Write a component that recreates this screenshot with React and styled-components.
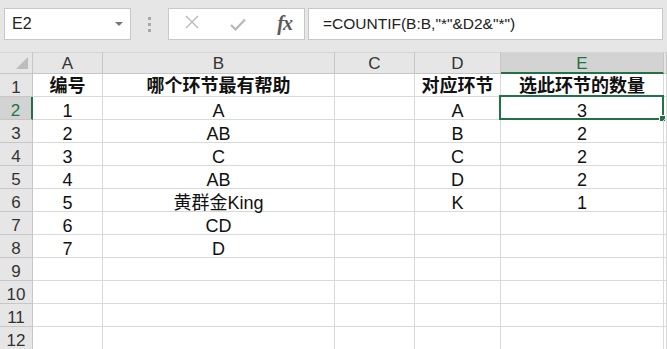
import React from 'react';
import styled, { createGlobalStyle } from 'styled-components';

const GlobalStyle = createGlobalStyle`
    html, body {
        margin: 0;
        padding: 0;
        background: #ffffff;
        overflow: hidden;
    }
    body {
        font-family: "Liberation Sans", "Noto Sans CJK SC", sans-serif;
    }
`;

const GREEN = '#217346';
const COLS = [70, 232, 80, 86, 163];
const LETTERS = ['A', 'B', 'C', 'D', 'E'];

const Page = styled.div`
    width: 667px;
    height: 349px;
    overflow: hidden;
    background: #ffffff;
`;

const Toolbar = styled.div`
    height: 52px;
    background: #e6e6e6;
    display: flex;
    align-items: flex-start;
    padding: 8px 4px 0 4px;
    box-sizing: border-box;
`;

const NameBox = styled.div`
    width: 127px;
    height: 32px;
    box-sizing: border-box;
    background: #ffffff;
    border: 1px solid #c8c8c8;
    display: flex;
    align-items: center;
    justify-content: space-between;
    padding: 0 7px 0 7px;
    font-size: 16px;
    color: #222;
`;

const Caret = styled.span`
    width: 0;
    height: 0;
    border-left: 4px solid transparent;
    border-right: 4px solid transparent;
    border-top: 4px solid #777;
`;

const Grip = styled.div`
    width: 37px;
    height: 32px;
    display: flex;
    flex-direction: column;
    align-items: center;
    justify-content: center;
    gap: 3px;

    span {
        width: 3px;
        height: 3px;
        background: #a8a8a8;
    }
`;

const ButtonBox = styled.div`
    width: 137px;
    height: 32px;
    box-sizing: border-box;
    background: #ffffff;
    border: 1px solid #c8c8c8;
    display: flex;
    align-items: center;
    justify-content: space-between;
    padding: 0 12px 0 14px;
`;

const Fx = styled.span`
    font-family: "Liberation Serif", "DejaVu Serif", serif;
    font-style: italic;
    font-weight: 700;
    font-size: 20px;
    color: #5a5a5a;
    letter-spacing: -1px;
    margin-top: -2px;
`;

const FormulaBox = styled.div`
    margin-left: 3px;
    flex: 1;
    height: 32px;
    box-sizing: border-box;
    background: #ffffff;
    border: 1px solid #c8c8c8;
    display: flex;
    align-items: center;
    padding-left: 14px;
    font-size: 15.5px;
    color: #222;
`;

const Grid = styled.div`
    display: grid;
    grid-template-columns: 33px ${COLS.map((w) => `${w}px`).join(' ')} 1fr;
    grid-auto-rows: 23px;
    grid-template-rows: 22px;
`;

const Corner = styled.div`
    background: #e6e6e6;
    border-right: 1px solid #c6c6c6;
    border-bottom: 1px solid #c6c6c6;
    border-top: 1px solid #d6d6d6;
    box-sizing: border-box;
    position: relative;

    &::after {
        content: '';
        position: absolute;
        right: 4px;
        bottom: 4px;
        width: 0;
        height: 0;
        border-left: 12px solid transparent;
        border-bottom: 12px solid #bdbdbd;
    }
`;

const ColHead = styled.div`
    box-sizing: border-box;
    background: ${(p) => (p.$active ? '#d3d3d3' : '#e6e6e6')};
    border-top: 1px solid #d6d6d6;
    border-right: 1px solid #c6c6c6;
    border-bottom: ${(p) => (p.$active ? `2px solid ${GREEN}` : '1px solid #c6c6c6')};
    color: ${(p) => (p.$active ? GREEN : '#333')};
    font-size: 17px;
    display: flex;
    align-items: center;
    justify-content: center;
    line-height: 1;
    padding-top: ${(p) => (p.$active ? '1px' : '0')};
`;

const RowHead = styled.div`
    box-sizing: border-box;
    background: ${(p) => (p.$active ? '#d3d3d3' : '#e6e6e6')};
    border-right: ${(p) => (p.$active ? `2px solid ${GREEN}` : '1px solid #c6c6c6')};
    border-bottom: 1px solid #c6c6c6;
    color: ${(p) => (p.$active ? GREEN : '#333')};
    font-size: 17px;
    display: flex;
    align-items: center;
    justify-content: center;
    line-height: 1;
    padding-top: 5px;
`;

const Cell = styled.div`
    box-sizing: border-box;
    border-right: 1px solid #d9d9d9;
    border-bottom: 1px solid #d9d9d9;
    font-size: 18px;
    font-weight: ${(p) => (p.$bold ? 700 : 400)};
    color: #111;
    display: flex;
    align-items: center;
    justify-content: center;
    white-space: nowrap;
    line-height: 1;
    position: relative;
    padding-top: ${(p) => (p.$bold ? '2px' : '5px')};
`;

const Selection = styled.div`
    position: absolute;
    left: -2px;
    top: -2px;
    right: -1px;
    bottom: -1px;
    border: 2px solid ${GREEN};
    pointer-events: none;

    &::after {
        content: '';
        position: absolute;
        right: -4px;
        bottom: -4px;
        width: 5px;
        height: 5px;
        background: ${GREEN};
        border: 1px solid #fff;
    }
`;

const rows = [
    ['编号', '哪个环节最有帮助', '', '对应环节', '选此环节的数量'],
    ['1', 'A', '', 'A', '3'],
    ['2', 'AB', '', 'B', '2'],
    ['3', 'C', '', 'C', '2'],
    ['4', 'AB', '', 'D', '2'],
    ['5', '黄群金King', '', 'K', '1'],
    ['6', 'CD', '', '', ''],
    ['7', 'D', '', '', ''],
    ['', '', '', '', ''],
    ['', '', '', '', ''],
    ['', '', '', '', ''],
    ['', '', '', '', ''],
];

const CrossIcon = () => (
    <svg width="14" height="14" viewBox="0 0 14 14">
        <path d="M1 1 L13 13 M13 1 L1 13" stroke="#b8b8b8" strokeWidth="1.3" fill="none" />
    </svg>
);

const CheckIcon = () => (
    <svg width="16" height="13" viewBox="0 0 16 13">
        <path d="M1 7 L5.5 11.5 L15 1.5" stroke="#b8b8b8" strokeWidth="2.2" fill="none" />
    </svg>
);

const App = () => {
    return (
        <Page>
            <GlobalStyle />
            <Toolbar>
                <NameBox>
                    E2
                    <Caret />
                </NameBox>
                <Grip>
                    <span />
                    <span />
                    <span />
                </Grip>
                <ButtonBox>
                    <span style={{ marginLeft: 2 }}>
                        <CrossIcon />
                    </span>
                    <CheckIcon />
                    <Fx>fx</Fx>
                </ButtonBox>
                <FormulaBox>=COUNTIF(B:B,"*"&amp;D2&amp;"*")</FormulaBox>
            </Toolbar>
            <Grid>
                <Corner />
                {LETTERS.map((l) => (
                    <ColHead key={l} $active={l === 'E'}>
                        {l}
                    </ColHead>
                ))}
                <ColHead />
                {rows.map((row, r) => (
                    <React.Fragment key={r}>
                        <RowHead $active={r === 1}>{r + 1}</RowHead>
                        {row.map((v, c) => (
                            <Cell key={c} $bold={r === 0}>
                                {v}
                                {r === 1 && c === 4 && <Selection />}
                            </Cell>
                        ))}
                        <Cell />
                    </React.Fragment>
                ))}
            </Grid>
        </Page>
    );
};

export default App;
